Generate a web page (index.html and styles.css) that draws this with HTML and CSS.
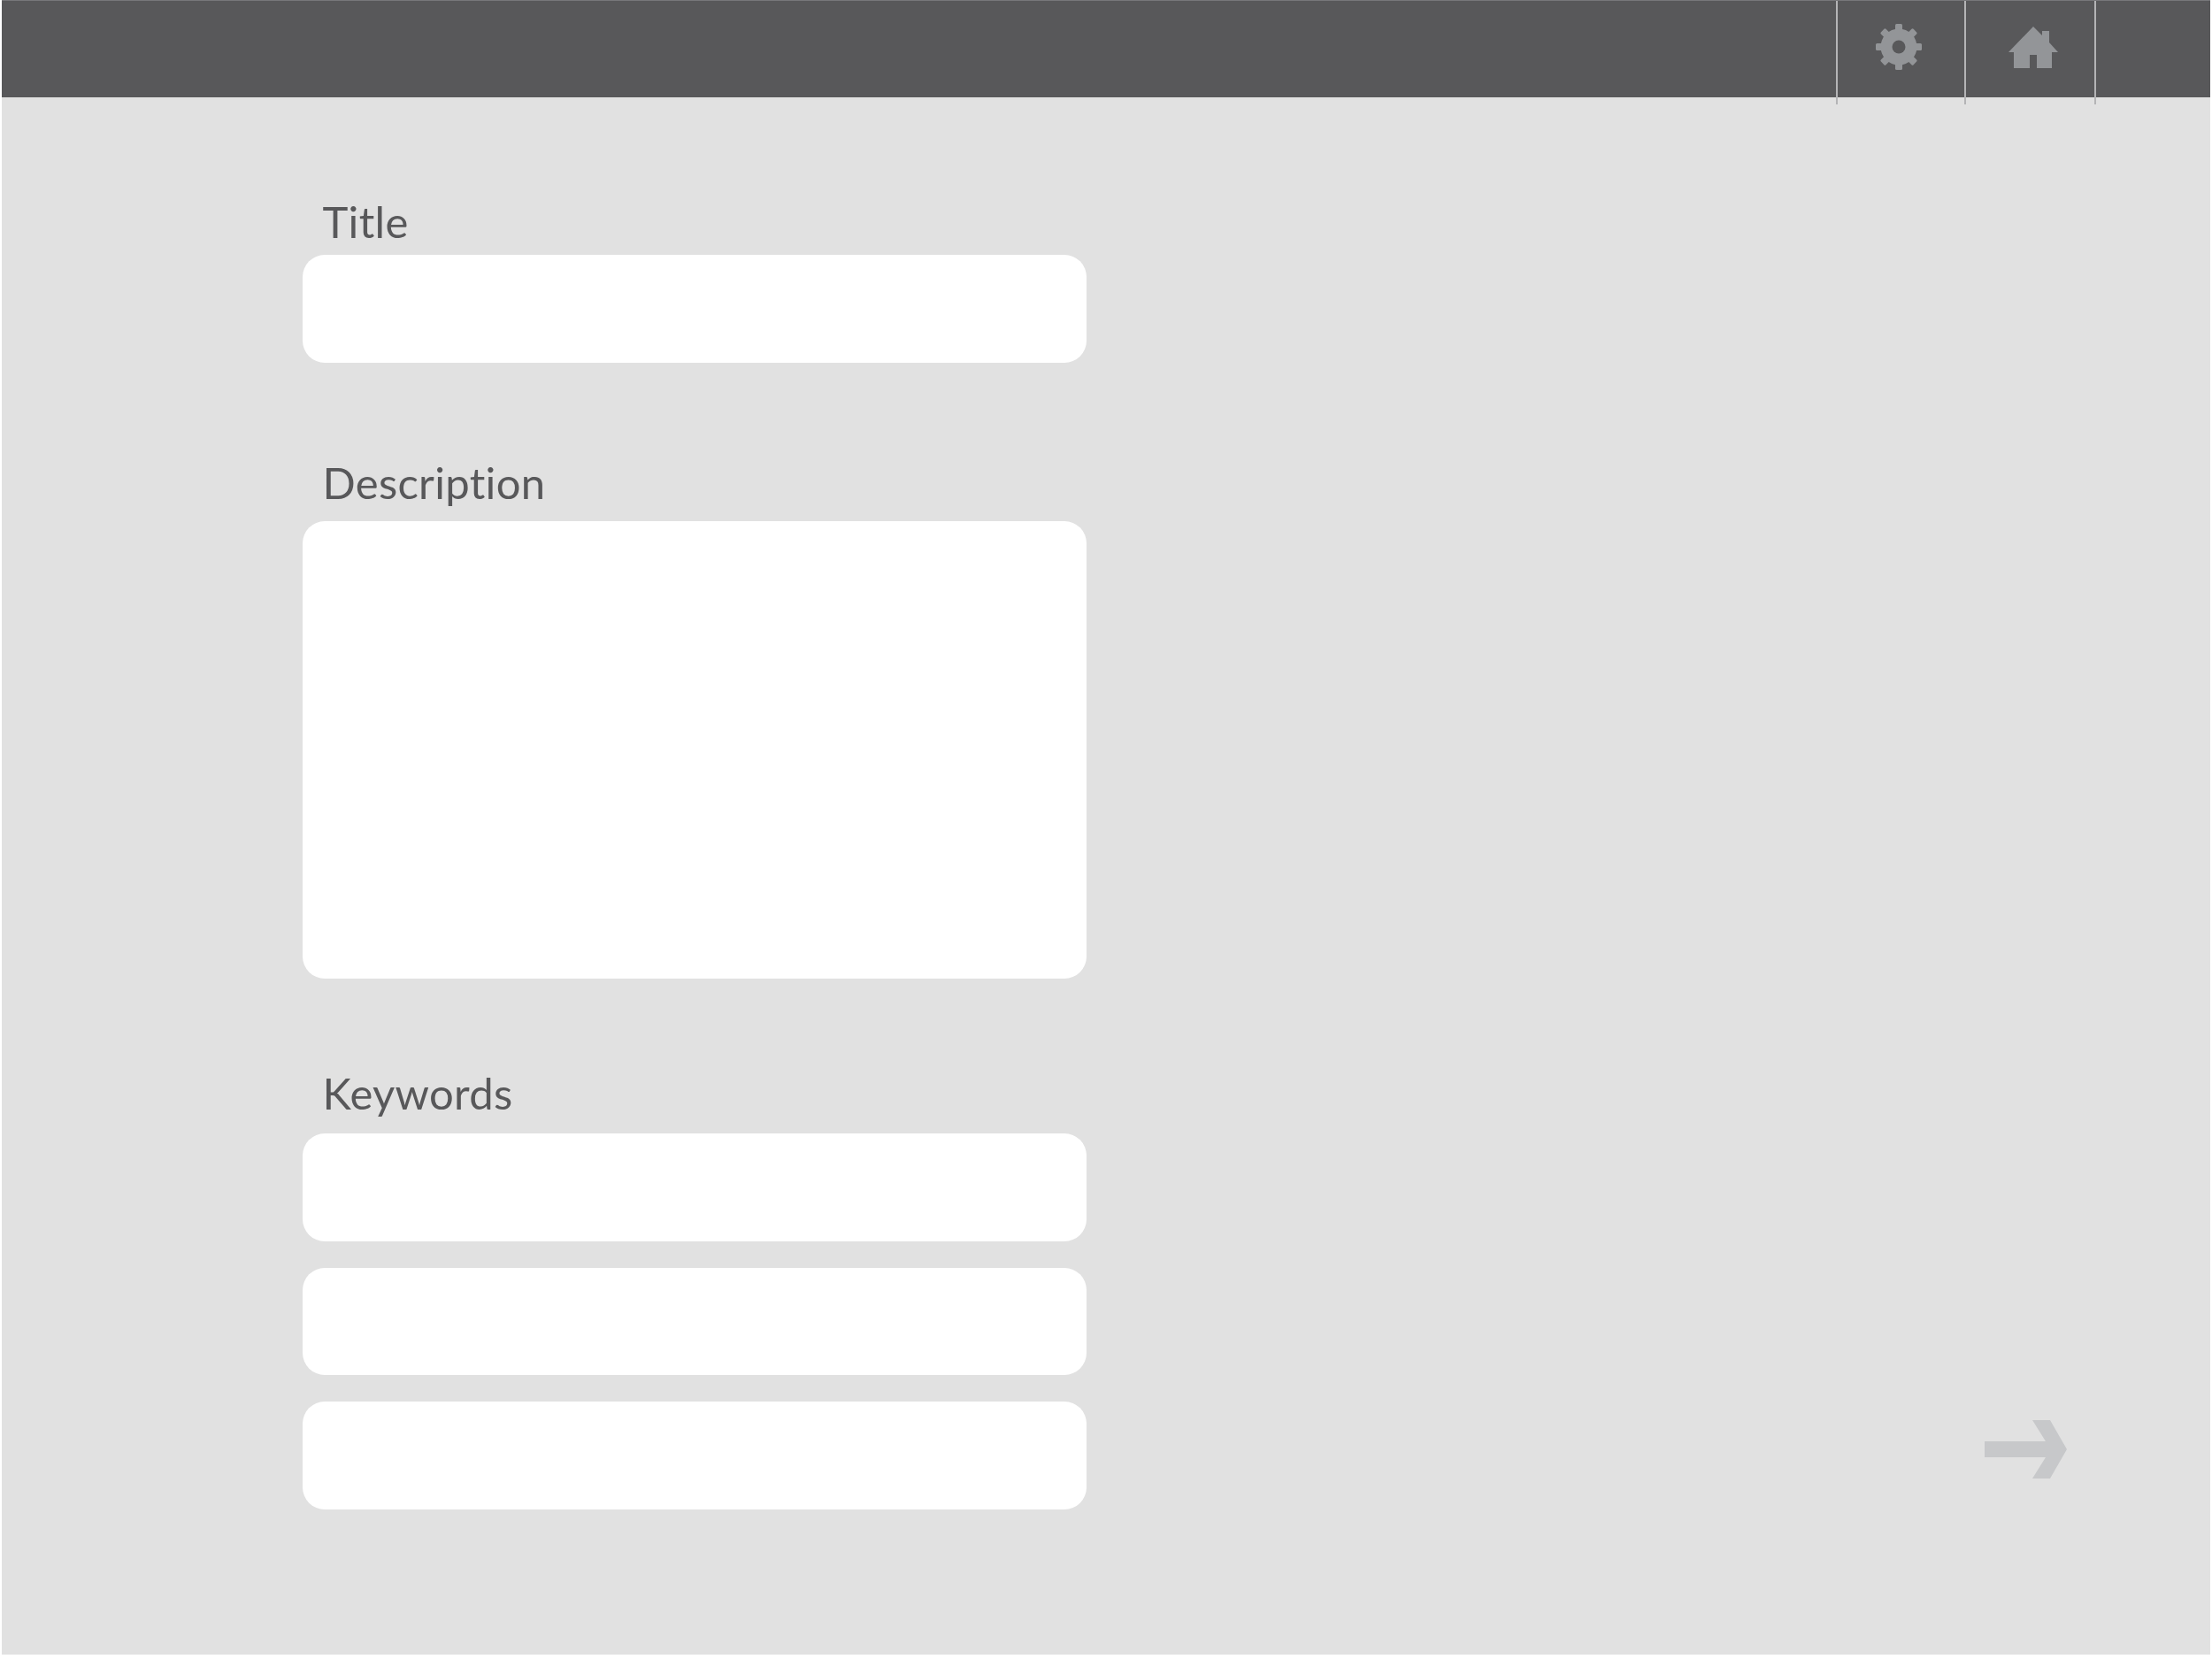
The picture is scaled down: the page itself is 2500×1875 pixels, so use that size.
FILE: index.html
```html
<!DOCTYPE html>
<html dir="ltr" lang="en">

<head>
  <meta charset="utf-8" />
  <title>Details</title>
  <link rel="stylesheet" href="styles.css">
</head>

<body>
  <div class="screen">
    <header class="topbar">
      <nav class="topnav">
        <a class="topnav-item topnav-gear">
          <svg width="54" height="54" viewBox="0 0 54 54">
            <g fill="#939598">
              <circle cx="27" cy="27" r="20.5" />
              <rect x="23" y="1" width="8" height="52" rx="1.5" />
              <rect x="23" y="1" width="8" height="52" rx="1.5" transform="rotate(45 27 27)" />
              <rect x="23" y="1" width="8" height="52" rx="1.5" transform="rotate(90 27 27)" />
              <rect x="23" y="1" width="8" height="52" rx="1.5" transform="rotate(135 27 27)" />
            </g>
            <circle cx="27" cy="27" r="7.5" fill="#58585a" />
          </svg>
        </a>
        <a class="topnav-item topnav-home">
          <svg width="56" height="48" viewBox="0 0 56 48">
            <path fill="#939598" d="M28 0 L38 10 V5 H46 V18 L56 29 H49 V47 H32 V32 H24 V47 H6 V29 H0 Z" />
          </svg>
        </a>
      </nav>
    </header>

    <main class="content">
      <form class="details">
        <div class="field field-title">
          <label class="field-label">Title</label>
          <div class="box"></div>
        </div>
        <div class="field field-description">
          <label class="field-label">Description</label>
          <div class="box box-tall"></div>
        </div>
        <div class="field field-keywords">
          <label class="field-label">Keywords</label>
          <div class="box"></div>
          <div class="box"></div>
          <div class="box"></div>
        </div>
      </form>
      <a class="next">
        <svg width="93" height="66" viewBox="0 0 93 66">
          <path fill="#c7c8ca" d="M54 0 H74 L93 33 L74 66 H54 L69 42 H0 V24 H69 Z" />
        </svg>
      </a>
    </main>
  </div>
</body>

</html>
```

FILE: styles.css
```css
body {
  margin: 0;
  background: #fff;
  font-family: 'Lato', sans-serif;
}

.screen {
  display: flex;
  flex-direction: column;
  height: 1870px;
  margin: 0 2px;
  background: #e1e1e1;
}

.topbar {
  display: flex;
  justify-content: flex-end;
  flex: none;
  box-sizing: border-box;
  height: 110px;
  padding-right: 129px;
  background: #58585a;
  border-top: 1px solid #77777a;
}

.topnav {
  display: flex;
  height: 117px;
  border-right: 2px solid #b4b4b6;
}

.topnav-item {
  display: flex;
  justify-content: center;
  box-sizing: border-box;
  border-left: 2px solid #b4b4b6;
}

.topnav-gear {
  width: 145px;
  padding: 25px 5px 0 0;
}

.topnav-home {
  width: 147px;
  padding: 29px 0 0 7px;
}

.content {
  display: flex;
  justify-content: space-between;
  flex: 1;
  padding: 0 162px 0 339.5px;
}

.details {
  width: 886.5px;
}

.field-label {
  display: block;
  padding-left: 23px;
  font-size: 49px;
  font-variant-ligatures: none;
  letter-spacing: 0.3px;
  line-height: 60px;
  color: #58585a;
}

.field-title {
  margin-top: 109.5px;
}

.field-title .field-label {
  margin-bottom: 8.5px;
}

.field-description {
  margin-top: 105px;
}

.field-description .field-label {
  margin-bottom: 14.5px;
}

.field-keywords {
  margin-top: 98.5px;
}

.field-keywords .field-label {
  margin-bottom: 16.5px;
}

.box {
  height: 121.5px;
  background: #fff;
  border-radius: 25px;
}

.box + .box {
  margin-top: 30px;
}

.box-tall {
  height: 517px;
}

.next {
  align-self: flex-end;
  display: flex;
  margin-bottom: 199px;
}
```
